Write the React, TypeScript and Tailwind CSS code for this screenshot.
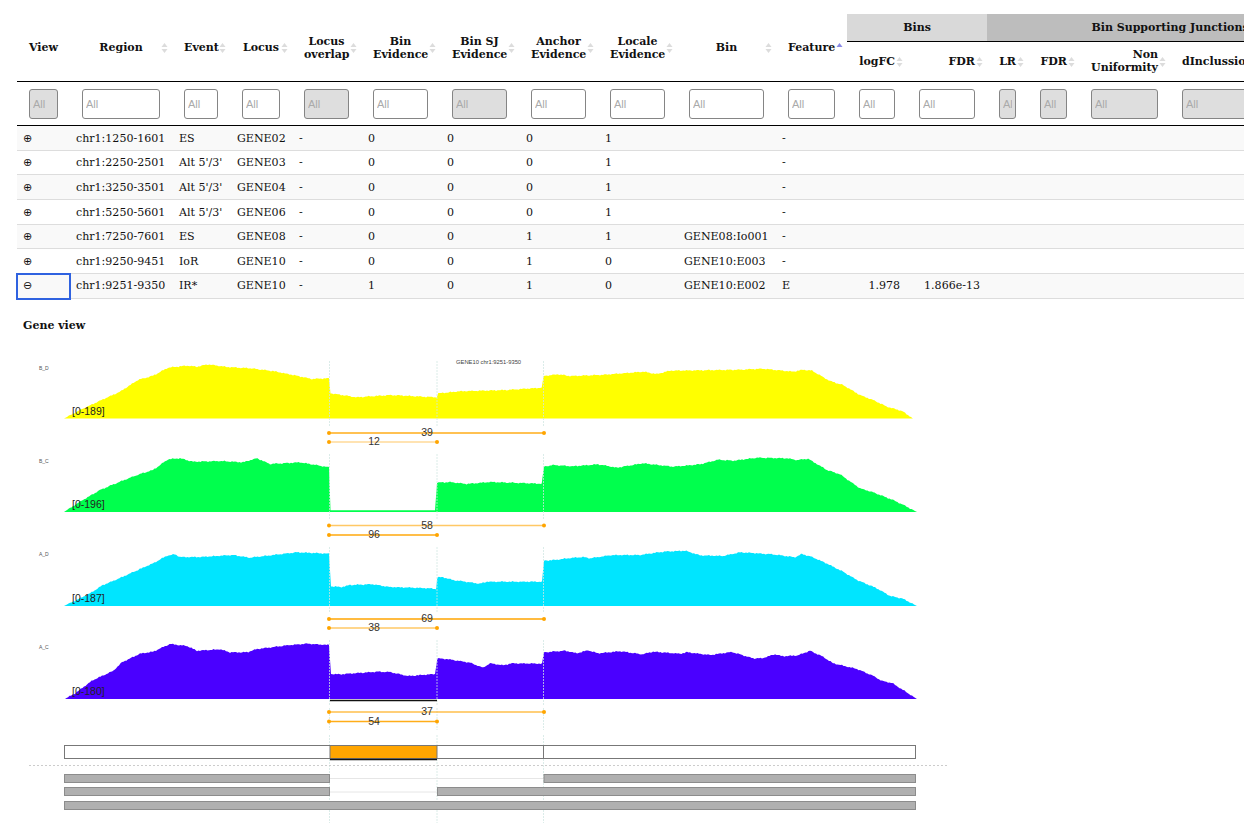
import React from 'react';

type Col = { label: string[]; width: number; left?: boolean; disabled?: boolean; sorted?: boolean; noSort?: boolean };

// Columns of the table, in order. The first 11 span both header rows.
const mainCols: Col[] = [
    { label: ['View'], width: 53, disabled: true, noSort: true },
    { label: ['Region'], width: 102 },
    { label: ['Event'], width: 58 },
    { label: ['Locus'], width: 62 },
    { label: ['Locus', 'overlap'], width: 69, disabled: true },
    { label: ['Bin', 'Evidence'], width: 79 },
    { label: ['Bin SJ', 'Evidence'], width: 79, disabled: true },
    { label: ['Anchor', 'Evidence'], width: 79 },
    { label: ['Locale', 'Evidence'], width: 79 },
    { label: ['Bin'], width: 99 },
    { label: ['Feature'], width: 71, sorted: true },
];

const groupCols: Col[] = [
    { label: ['logFC'], width: 60 },
    { label: ['FDR'], width: 80 },
    { label: ['LR'], width: 41, disabled: true },
    { label: ['FDR'], width: 51, disabled: true },
    { label: ['Non', 'Uniformity'], width: 91, disabled: true },
    { label: ['dInclussion'], width: 183, disabled: true, left: true, noSort: true },
];

const rows = [
    ['⊕', 'chr1:1250-1601', 'ES', 'GENE02', '-', '0', '0', '0', '1', '', '-', '', ''],
    ['⊕', 'chr1:2250-2501', "Alt 5'/3'", 'GENE03', '-', '0', '0', '0', '1', '', '-', '', ''],
    ['⊕', 'chr1:3250-3501', "Alt 5'/3'", 'GENE04', '-', '0', '0', '0', '1', '', '-', '', ''],
    ['⊕', 'chr1:5250-5601', "Alt 5'/3'", 'GENE06', '-', '0', '0', '0', '1', '', '-', '', ''],
    ['⊕', 'chr1:7250-7601', 'ES', 'GENE08', '-', '0', '0', '1', '1', 'GENE08:Io001', '-', '', ''],
    ['⊕', 'chr1:9250-9451', 'IoR', 'GENE10', '-', '0', '0', '1', '0', 'GENE10:E003', '-', '', ''],
    ['⊖', 'chr1:9251-9350', 'IR*', 'GENE10', '-', '1', '0', '1', '0', 'GENE10:E002', 'E', '1.978', '1.866e-13'],
];

const SortIcon: React.FC<{ sorted?: boolean }> = ({ sorted }) => (
    <svg className="absolute right-[4px] top-1/2 -translate-y-1/2" width="7" height="12" viewBox="0 0 7 12">
        <path d="M3.5 1 L6.5 5 L0.5 5 Z" fill={sorted ? '#8a8ae6' : '#dcdcdc'} />
        {!sorted && <path d="M3.5 11 L6.5 7 L0.5 7 Z" fill="#dcdcdc" />}
    </svg>
);

const HeaderCell: React.FC<{ col: Col; rowSpan?: number; right?: boolean }> = ({ col, rowSpan, right }) => (
    <th rowSpan={rowSpan} className={`relative border-b border-black pl-[12px] pr-[12px] font-bold leading-[13px] ${right ? 'pb-[1px]' : ''} ${col.left ? 'text-left' : right ? 'text-right' : 'text-center'}`}>
        {col.label.map((line) => <div key={line} className="whitespace-nowrap">{line}</div>)}
        {!col.noSort && <SortIcon sorted={col.sorted} />}
    </th>
);

const FilterCell: React.FC<{ col: Col }> = ({ col }) => (
    <td className="border-b border-black px-[12px]">
        <input
            disabled={col.disabled}
            placeholder="All"
            className={`block h-[30px] w-full rounded-[3px] border border-[#858585] pl-[3px] pr-[3px] font-['Liberation_Sans',sans-serif] text-[11px] placeholder:text-[#aaaaaa] ${col.disabled ? 'bg-[#dedede]' : 'bg-white'}`}
        />
    </td>
);

// Coverage outlines read off the picture, in page coordinates
const yellow: number[][] = [[64, 418.5], [80, 410], [100, 400.7], [120, 391.7], [138, 380], [153, 375.7], [168, 367.7], [187, 365.7], [197, 366.7], [208, 364.3], [227, 367], [250, 368.3], [273, 371], [293, 375], [312, 379], [329, 378.3], [330.5, 393.3], [356.7, 397.3], [390, 395], [436.7, 397.3], [438.3, 393.3], [460, 391.3], [506.7, 390], [541.7, 387.7], [543.7, 376], [558, 374.3], [570, 376], [600, 375], [623, 373.3], [643, 371.7], [657, 374], [670, 370.7], [700, 370.3], [740, 369.7], [763, 368.7], [793, 371.7], [803, 369.7], [812, 370.7], [830, 381], [843, 385], [860, 395], [873, 400], [887, 406.7], [902, 411], [913, 418.5]];
const green: number[][] = [[64, 512], [80, 501.7], [100, 490], [120, 481.7], [137, 475], [153, 470], [168, 459.3], [180, 458.3], [193, 461.7], [220, 461], [243, 462.3], [257, 458.3], [270, 464], [300, 462.3], [329, 467.3], [330.5, 510.3], [435, 510.3], [437, 482.7], [450, 482], [466.7, 484], [490, 482], [541.7, 483.7], [544, 466.7], [553, 465], [573, 466.3], [598, 464.3], [617, 467.7], [643, 463.3], [673, 466.7], [700, 464.3], [718, 459.7], [733, 460.7], [757, 457.7], [787, 458.3], [797, 460], [808, 458.7], [827, 470], [840, 474.3], [860, 488.3], [873, 492.3], [893, 500], [907, 506.7], [917, 512]];
const cyan: number[][] = [[64, 606], [73, 601.7], [90, 593.3], [103, 585], [120, 578], [140, 569], [153, 563.3], [167, 555.7], [175, 554.3], [180, 557], [200, 557], [233, 555], [250, 557.7], [267, 555.7], [297, 552.3], [329, 553.7], [331, 586.3], [341.7, 587], [350, 585], [373, 584.3], [390, 587], [430, 588.3], [436, 589], [437.3, 577.3], [443, 577.3], [453, 580], [480, 583.7], [487, 581.7], [542, 581.7], [544, 560.7], [557, 559.7], [568, 558.3], [583, 557], [590, 558.3], [610, 555.3], [623, 555], [640, 555], [663, 551.7], [685, 550.7], [700, 555.3], [723, 556], [740, 552.3], [773, 554.3], [795, 557.3], [802, 554], [812, 557], [828, 564], [843, 571.7], [857, 580], [877, 588.3], [890, 596], [902, 598.3], [917, 606]];
const purple: number[][] = [[65, 699], [75, 693.3], [93, 680], [113, 671], [122, 662.3], [140, 653.7], [153, 651.7], [170, 644], [187, 646], [197, 650.7], [220, 649.3], [230, 652.3], [247, 652.3], [257, 649], [290, 645], [307, 643.7], [329, 645], [331, 674], [340, 674.3], [377, 671.7], [390, 672], [408, 676], [435, 674], [437.3, 658.3], [447, 659], [470, 662.7], [483, 667.7], [490, 663.3], [503, 665.3], [512, 663.3], [542, 663.7], [544, 652.3], [565, 650.7], [577, 653.3], [588, 650.3], [598, 653.3], [620, 651.3], [642, 654.3], [653, 651.7], [680, 653.7], [687, 652.3], [710, 655], [732, 652], [753, 658.3], [762, 658.3], [775, 654.3], [783, 656.3], [798, 655.3], [810, 650.7], [823, 656.7], [833, 663.3], [857, 669], [873, 675.7], [882, 681], [892, 683], [903, 690], [917, 699]];

// adds a little pixel jitter so the outline reads like coverage data
const outline = (pts: number[][]) => {
    const out: string[] = [];
    const base = pts[0][1];
    out.push(`${pts[0][0]},${base}`);
    for (let i = 0; i < pts.length - 1; i++) {
        const [x0, y0] = pts[i];
        const [x1, y1] = pts[i + 1];
        for (let x = x0; x < x1; x += 1.5) {
            const y = y0 + ((y1 - y0) * (x - x0)) / (x1 - x0);
            const jitter = y < base - 2 ? Math.sin(x * 1.7) * 0.35 + Math.sin(x * 0.61) * 0.3 : 0;
            out.push(`${x.toFixed(1)},${(y + jitter).toFixed(1)}`);
        }
    }
    const last = pts[pts.length - 1];
    out.push(`${last[0]},${base}`);
    return out.join(' ');
};

const tracks = [
    { name: 'B_D', range: '[0-189]', pts: yellow, color: '#ffff00', labelY: 370, rangeY: 415 },
    { name: 'B_C', range: '[0-196]', pts: green, color: '#00ff4d', labelY: 463, rangeY: 508 },
    { name: 'A_D', range: '[0-187]', pts: cyan, color: '#00e5ff', labelY: 556, rangeY: 602 },
    { name: 'A_C', range: '[0-180]', pts: purple, color: '#4a00ff', labelY: 649, rangeY: 695 },
];

const junctions = [
    { y: 433, end: 544, label: '39', lx: 427, opacity: 0.9 },
    { y: 442, end: 437, label: '12', lx: 374, opacity: 0.4 },
    { y: 525.5, end: 544, label: '58', lx: 427, opacity: 0.6 },
    { y: 535, end: 437, label: '96', lx: 374, opacity: 0.95 },
    { y: 619, end: 544, label: '69', lx: 427, opacity: 1 },
    { y: 628, end: 437, label: '38', lx: 374, opacity: 0.6 },
    { y: 712, end: 544, label: '37', lx: 427, opacity: 0.7 },
    { y: 721.5, end: 437, label: '54', lx: 374, opacity: 0.9 },
];

const guideSpans = [[361, 426], [454, 519], [547, 612], [640, 706], [708, 730], [735, 823]];

const GeneView: React.FC = () => (
    <svg className="block" width="960" height="478" viewBox="0 345 960 478" fontFamily="'Liberation Sans', sans-serif">
        {tracks.map((t) => (
            <g key={t.name}>
                <polygon points={outline(t.pts)} fill={t.color} />
                <text x="39" y={t.labelY} fontSize="5" fill="#555">{t.name}</text>
            </g>
        ))}
        {[329.5, 437, 543.5].map((x) =>
            guideSpans.map(([a, b]) => (
                <line key={`${x}-${a}`} x1={x} x2={x} y1={a} y2={b} stroke="#cfe6e2" strokeWidth="1" strokeDasharray="2 1" opacity="0.75" />
            ))
        )}
        {tracks.map((t) => (
            <text key={t.range} x="72" y={t.rangeY} fontSize="10.5" fill="#222">{t.range}</text>
        ))}
        <text x="456" y="364" fontSize="5.8" fill="#444">GENE10 chr1:9251-9350</text>
        {junctions.map((j) => (
            <g key={j.y}>
                <line x1="329" x2={j.end} y1={j.y} y2={j.y} stroke="#ffa500" strokeWidth="1.4" opacity={j.opacity} />
                <circle cx="329" cy={j.y} r="2" fill="#ffa500" />
                <circle cx={j.end} cy={j.y} r="2" fill="#ffa500" />
                <text x={j.lx} y={j.y + 3} fontSize="10.5" fill="#333" textAnchor="middle">{j.label}</text>
            </g>
        ))}
        <line x1="330" x2="437" y1="700.5" y2="700.5" stroke="#111" strokeWidth="1.6" />

        <rect x="64.5" y="745.5" width="851" height="13" fill="#fff" stroke="#777" />
        <rect x="330" y="745.5" width="107" height="13" fill="#ffa500" stroke="#777" />
        <line x1="543.5" x2="543.5" y1="745" y2="759" stroke="#777" />
        <line x1="330" x2="437" y1="759.5" y2="759.5" stroke="#111" strokeWidth="1.6" />
        <line x1="29" x2="949" y1="765.5" y2="765.5" stroke="#cccccc" strokeDasharray="2 2" />

        <line x1="329" x2="544" y1="778.5" y2="778.5" stroke="#e6e6e6" />
        <rect x="64.5" y="774.5" width="265" height="8" fill="#b0b0b0" stroke="#8c8c8c" />
        <rect x="544" y="774.5" width="371.5" height="8" fill="#b0b0b0" stroke="#8c8c8c" />
        <line x1="329" x2="437" y1="792" y2="792" stroke="#e6e6e6" />
        <rect x="64.5" y="787.5" width="265" height="8" fill="#b0b0b0" stroke="#8c8c8c" />
        <rect x="437.5" y="787.5" width="478" height="8" fill="#b0b0b0" stroke="#8c8c8c" />
        <rect x="64.5" y="801.5" width="851" height="8" fill="#b0b0b0" stroke="#8c8c8c" />
    </svg>
);

const allCols = [...mainCols, ...groupCols];

export default function App() {
    return (
        <div className="h-[823px] w-[1244px] overflow-hidden bg-white font-['DejaVu_Serif',serif] text-[11px] text-[#111]">
            <div className="pl-[17px] pt-[14px]">
                <table className="w-[1336px] table-fixed border-separate border-spacing-0">
                    <colgroup>
                        {allCols.map((c, i) => <col key={i} style={{ width: c.width }} />)}
                    </colgroup>
                    <thead>
                        <tr className="h-[28px]">
                            {mainCols.map((c, i) => <HeaderCell key={i} col={c} rowSpan={2} />)}
                            <th colSpan={2} className="border-b border-black bg-[#d9d9d9] pt-[1px] font-bold">Bins</th>
                            <th colSpan={4} className="border-b border-black bg-[#bdbdbd] pt-[1px] font-bold">Bin Supporting Junctions</th>
                        </tr>
                        <tr className="h-[40px]">
                            {groupCols.map((c, i) => <HeaderCell key={i} col={c} right />)}
                        </tr>
                        <tr className="h-[44px]">
                            {allCols.map((c, i) => <FilterCell key={i} col={c} />)}
                        </tr>
                    </thead>
                    <tbody>
                        {rows.map((row, r) => (
                            <tr key={r} className={`h-[24.67px] ${r % 2 === 0 ? 'bg-[#f9f9f9]' : 'bg-white'}`}>
                                {allCols.map((_, c) => (
                                    <td
                                        key={c}
                                        className={`whitespace-nowrap border-b border-[#dddddd] pt-[2px] text-[11.05px] ${c === 0 || c === 1 || c === 10 ? 'pl-[6px] pr-[7px]' : 'px-[7px]'} ${c === 11 || c === 12 ? 'text-right' : ''} ${c === 0 ? "font-['DejaVu_Sans',sans-serif]" : ''} ${c === 0 && r === 6 ? 'outline-2 -outline-offset-1 outline-[#2f62e0]' : ''}`}
                                    >
                                        {row[c] ?? ''}
                                    </td>
                                ))}
                            </tr>
                        ))}
                    </tbody>
                </table>
            </div>
            <h2 className="ml-[23px] mb-[12px] mt-[20px] text-[11px] font-bold leading-[14px]">Gene view</h2>
            <GeneView />
        </div>
    );
}
